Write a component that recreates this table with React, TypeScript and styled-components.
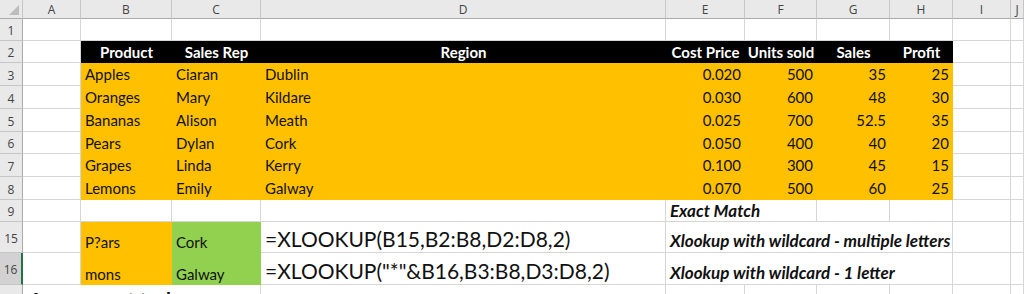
import React from "react";
import styled, { createGlobalStyle, css } from "styled-components";

const GlobalStyle = createGlobalStyle`
  html, body {
    margin: 0;
    padding: 0;
    background: #ffffff;
    overflow: hidden;
  }
  body {
    font-family: Lato, "Liberation Sans", sans-serif;
  }
`;

const COLS = ["A", "B", "C", "D", "E", "F", "G", "H", "I", "J"];
const WIDTHS = [23, 58, 91, 89, 405, 79, 72, 73, 63, 58];
const GRID = "#d6d6d6";

type Fill = "none" | "yellow" | "black" | "green";
type VAlign = "center" | "bottom" | "top";

const fills: Record<Fill, string> = {
  none: "#ffffff",
  yellow: "#ffc000",
  black: "#000000",
  green: "#92d050",
};

const Sheet = styled.div`
  display: grid;
  grid-template-columns: ${WIDTHS.map((w) => `${w}px`).join(" ")} 1fr;
  grid-template-rows: 19px 22px 22px 23px 23px 23px 22px 23px 23px 22px 31px 32px 22px;
  width: 1024px;
  height: 294px;
  overflow: hidden;
`;

const Corner = styled.div`
  position: relative;
  background: #e9e9e9;
  border-right: 1px solid #c6c6c6;
  border-bottom: 1px solid #ababab;
  box-sizing: border-box;

  &::after {
    content: "";
    position: absolute;
    right: 3px;
    bottom: 3px;
    width: 0;
    height: 0;
    border-left: 10px solid transparent;
    border-bottom: 10px solid #bdbdbd;
  }
`;

const ColHead = styled.div`
  display: flex;
  align-items: center;
  justify-content: center;
  background: #e9e9e9;
  border-right: 1px solid #c6c6c6;
  border-bottom: 1px solid #ababab;
  box-sizing: border-box;
  font-family: "Open Sans", "Liberation Sans", sans-serif;
  font-size: 12px;
  color: #444444;
`;

const RowHead = styled.div<{ $selected?: boolean; $valign: VAlign }>`
  display: flex;
  align-items: ${(p) => (p.$valign === "top" ? "flex-start" : "center")};
  justify-content: center;
  background: ${(p) => (p.$selected ? "#d2d2d2" : "#e9e9e9")};
  border-bottom: 1px solid #c6c6c6;
  border-right: ${(p) => (p.$selected ? "2px solid #217346" : "1px solid #ababab")};
  box-sizing: border-box;
  font-family: "Open Sans", "Liberation Sans", sans-serif;
  font-size: 12px;
  color: #444444;
  padding-top: ${(p) => (p.$valign === "top" ? "6px" : "2px")};
`;

const Cell = styled.div<{
  $fill: Fill;
  $align: "left" | "right" | "center";
  $bold?: boolean;
  $italic?: boolean;
  $size: number;
  $span: number;
  $valign: VAlign;
}>`
  grid-column: span ${(p) => p.$span};
  display: flex;
  align-items: ${(p) =>
    p.$valign === "bottom" ? "flex-end" : p.$valign === "top" ? "flex-start" : "center"};
  justify-content: ${(p) =>
    p.$align === "right" ? "flex-end" : p.$align === "center" ? "center" : "flex-start"};
  padding: ${(p) =>
    p.$valign === "bottom" ? "0 3px 1px 4px" : p.$valign === "top" ? "3px 3px 0 6px" : "0 3px 0 4px"};
  box-sizing: border-box;
  white-space: nowrap;
  overflow: visible;
  min-width: 0;
  background: ${(p) => fills[p.$fill]};
  border-right: 1px solid ${(p) => (p.$fill === "none" ? GRID : fills[p.$fill])};
  border-bottom: 1px solid ${(p) => (p.$fill === "none" ? GRID : fills[p.$fill])};
  color: ${(p) => (p.$fill === "black" ? "#ffffff" : "#111111")};
  font-size: ${(p) => p.$size}px;
  font-weight: ${(p) => (p.$bold ? 700 : 400)};
  ${(p) =>
    p.$italic &&
    css`
      font-style: italic;
    `}
`;

type CellDef = {
  text?: string;
  fill?: Fill;
  align?: "left" | "right" | "center";
  bold?: boolean;
  italic?: boolean;
  size?: number;
  span?: number;
};

type RowDef = { num: string; cells: CellDef[]; valign?: VAlign; selected?: boolean };

const blank = (n: number): CellDef[] => Array.from({ length: n }, () => ({}));

const head = (text: string): CellDef => ({ text, fill: "black", align: "center", bold: true });

const note = (text: string, span: number): CellDef => ({
  text,
  bold: true,
  italic: true,
  size: 17,
  span,
});

const fruit: [string, string, string, string, string, string, string][] = [
  ["Apples", "Ciaran", "Dublin", "0.020", "500", "35", "25"],
  ["Oranges", "Mary", "Kildare", "0.030", "600", "48", "30"],
  ["Bananas", "Alison", "Meath", "0.025", "700", "52.5", "35"],
  ["Pears", "Dylan", "Cork", "0.050", "400", "40", "20"],
  ["Grapes", "Linda", "Kerry", "0.100", "300", "45", "15"],
  ["Lemons", "Emily", "Galway", "0.070", "500", "60", "25"],
];

const rows: RowDef[] = [
  { num: "1", cells: blank(10) },
  {
    num: "2",
    cells: [
      {},
      head("Product"),
      head("Sales Rep"),
      head("Region"),
      head("Cost Price"),
      head("Units sold"),
      head("Sales"),
      head("Profit"),
      {},
      {},
    ],
  },
  ...fruit.map((f, i) => ({
    num: String(i + 3),
    cells: [
      {},
      { text: f[0], fill: "yellow" as Fill },
      { text: f[1], fill: "yellow" as Fill },
      { text: f[2], fill: "yellow" as Fill },
      { text: f[3], fill: "yellow" as Fill, align: "right" as const },
      { text: f[4], fill: "yellow" as Fill, align: "right" as const },
      { text: f[5], fill: "yellow" as Fill, align: "right" as const },
      { text: f[6], fill: "yellow" as Fill, align: "right" as const },
      {},
      {},
    ],
  })),
  {
    num: "9",
    cells: [...blank(4), note("Exact Match", 2), ...blank(4)],
  },
  {
    num: "15",
    valign: "bottom",
    cells: [
      {},
      { text: "P?ars", fill: "yellow" },
      { text: "Cork", fill: "green" },
      { text: "=XLOOKUP(B15,B2:B8,D2:D8,2)", size: 21 },
      note("Xlookup with wildcard - multiple letters", 4),
      {},
      {},
    ],
  },
  {
    num: "16",
    valign: "bottom",
    selected: true,
    cells: [
      {},
      { text: "mons", fill: "yellow" },
      { text: "Galway", fill: "green" },
      { text: '=XLOOKUP("*"&B16,B3:B8,D3:D8,2)', size: 21 },
      note("Xlookup with wildcard - 1 letter", 4),
      {},
      {},
    ],
  },
  {
    num: "17",
    valign: "top",
    cells: [{ text: "Assessment task", bold: true, size: 20, span: 3 }, ...blank(7)],
  },
];

export default function App() {
  return (
    <>
      <GlobalStyle />
      <Sheet>
        <Corner />
        {COLS.map((c) => (
          <ColHead key={c}>{c}</ColHead>
        ))}
        {rows.map((r) => (
          <React.Fragment key={r.num}>
            <RowHead $selected={r.selected} $valign={r.valign ?? "center"}>
              {r.num}
            </RowHead>
            {r.cells.map((c, i) => (
              <Cell
                key={i}
                $fill={c.fill ?? "none"}
                $align={c.align ?? "left"}
                $bold={c.bold}
                $italic={c.italic}
                $size={c.size ?? 15}
                $span={c.span ?? 1}
                $valign={r.valign ?? "center"}
              >
                {c.text}
              </Cell>
            ))}
          </React.Fragment>
        ))}
      </Sheet>
    </>
  );
}
